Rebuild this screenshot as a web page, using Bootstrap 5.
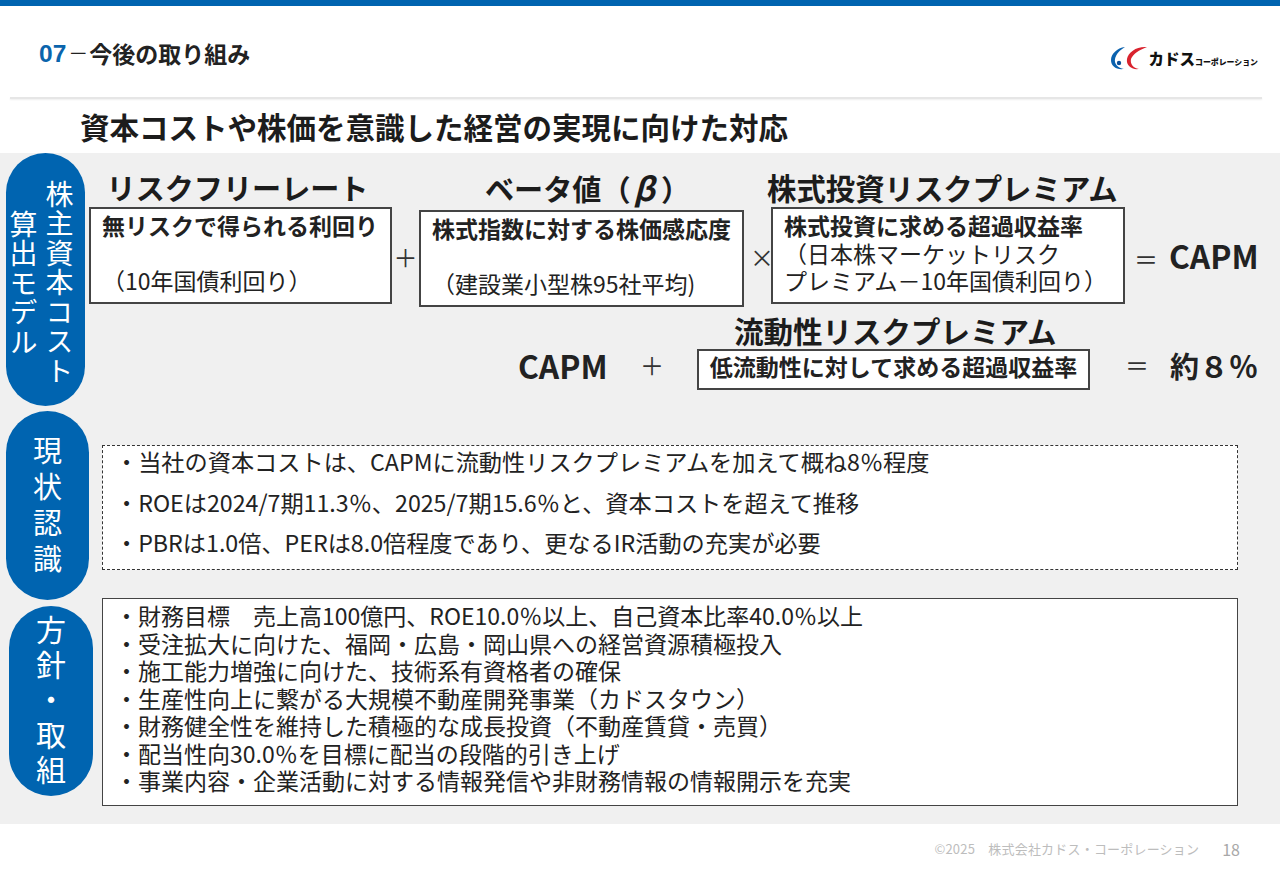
<!DOCTYPE html>
<html lang="ja"><head><meta charset="utf-8"><title>今後の取り組み</title>
<link href="https://cdn.jsdelivr.net/npm/bootstrap@5.3.0/dist/css/bootstrap.min.css" rel="stylesheet">
<style>
html,body{margin:0;height:886px;overflow:hidden;background:#fff}
body{font-family:"Noto Sans CJK JP","Noto Sans",sans-serif;color:#222}
.topline{height:6px;background:#0064b0}
.slidehead{height:91px;padding:4px 22px 0 39px}
.sec-no{font-size:24.5px;font-weight:700;color:#0a64ac;font-family:"Liberation Sans",sans-serif;line-height:1.2;margin-top:1px}
.sec-dash{font-size:20px;font-weight:400;color:#222;margin:0 2px}
.sec-name{font-size:23px;font-weight:700;color:#222;line-height:1.2;margin-left:-1px}
.headrule{height:2px;margin:0 18px 0 10px;background:#e6e6e6;box-shadow:0 1px 2px #eee}
.slidetitle{height:54px;padding-left:80px;font-size:29.5px;font-weight:700;line-height:54px;color:#1c1c1c;margin:0}
.panel{height:671px;background:#f0f0f0}
.pillbox{background:#0064b0;color:#fff;flex:none;border-radius:42px;font-size:29px}
.pill-a{width:79px;height:253px;margin-left:6px;border-radius:40px;writing-mode:vertical-rl;line-height:29px;padding:27px 0 0 0;font-size:28px;letter-spacing:1.5px;text-align:left}
.pill-a span{display:block;margin-right:11.5px}
.pill-a .col2{padding-top:29.5px;margin-right:7px}
.pill-b{width:83px;height:189px;margin:5px 0 0 6px;line-height:36px;text-align:center;padding-top:20px}
.pill-c{width:84px;height:190px;margin:6px 0 0 9px;line-height:35px;text-align:center;padding-top:5px;font-size:30px}
.formula{margin-left:4px;width:1191px}
.fgrid{display:grid;grid-template-columns:303px 27px 325px 27px 354px auto;align-items:start}
.fhead{font-size:29.1px;font-weight:700;line-height:36px;white-space:nowrap;color:#1c1c1c;margin:16px 0 1px}
.hd1{text-align:center;padding-right:6px}
.hd2{padding-left:66px}
.hd2 em{font-size:32px;margin:0 6px 0 3px}
.hd3{font-size:29.4px;margin-left:-4px}
.fbox{background:#fff;border:2px solid #444;font-size:23px;line-height:27.5px;padding:3px 0 0 11px;white-space:nowrap;height:97px}
.fbox b{font-size:23px;font-weight:700;display:block}
.fbox-mid{margin-top:3px}
.fop{font-size:24px;line-height:24px;text-align:center;color:#333;margin-top:38px}
.fop-x{padding-left:6px}
.fres{font-size:31.8px;font-weight:700;white-space:nowrap;padding-left:9px;margin-top:28px;line-height:40px}
.fres i{font-style:normal;font-weight:400;font-size:24px;margin-right:11px;color:#333}
.frow2-head{padding-left:645px;font-size:29.5px;font-weight:700;line-height:36px;white-space:nowrap;margin:5px 0 1px;color:#1c1c1c}
.frow2{padding-left:429px}
.capm{font-size:31.8px;font-weight:700;line-height:40px;width:114px;margin-top:-4px}
.fplus{font-size:24px;line-height:40px;width:65px;padding-left:8px;color:#333;margin-top:-4px}
.fbox2{background:#fff;border:2px solid #444;height:41px;width:393px;text-align:center;font-size:23px;font-weight:700;line-height:31px;white-space:nowrap}
.feq{font-size:24px;line-height:40px;width:80px;padding-left:35px;color:#333;margin-top:-4px}
.fpct{font-size:29px;font-weight:700;line-height:40px;white-space:nowrap;letter-spacing:.5px;margin-top:-4px}
.notebox{background:#fff;border:1px dashed #333;margin-left:13px;width:1136px;height:125px;font-size:23.2px;line-height:40.5px;padding:0 0 0 12px;white-space:nowrap;margin-top:39px}
.notebox div{margin-top:-5px;height:120px}
.planbox{background:#fff;border:1px solid #444;margin-left:9px;width:1136px;height:208px;font-size:23px;line-height:27.5px;padding:3px 0 0 12px;white-space:nowrap;margin-top:-2px}
.slidefoot{height:62px;padding:0 40px 12px 0}
.copy{font-size:13px;color:#bdbdbd;margin-right:23px;letter-spacing:.2px}
.pageno{font-size:16px;color:#a8a8a8}
.logowrap{padding-top:10px;gap:2px}
.logotype{font-weight:900;font-size:15.5px;color:#111;line-height:1;white-space:nowrap}
.logotype small{font-size:7.9px;font-weight:900}
</style></head>
<body>
<div class="topline"></div>
<header class="slidehead d-flex align-items-center justify-content-between">
  <div class="d-flex align-items-center"><span class="sec-no">07</span><span class="sec-dash">－</span><span class="sec-name">今後の取り組み</span></div>
  <div class="d-flex align-items-center logowrap">
    <svg width="36" height="25" viewBox="0 0 36 25"><path d="M14 1C6 2 0 8 0 14c0 6 5 10 13 9C7 22 3 18 4 13 5 8 9 4 14 1z" fill="#0b62ae"/><path d="M36 1C26 0 17 6 16 13c-1 6 4 11 12 10-6-1-9-5-8-10 2-5 8-9 16-12z" fill="#d9232e"/><circle cx="8" cy="17" r="2.2" fill="#0b4f98"/></svg>
    <span class="logotype">カドス<small>コーポレーション</small></span>
  </div>
</header>
<div class="headrule"></div>
<h1 class="slidetitle">資本コストや株価を意識した経営の実現に向けた対応</h1>
<main class="panel">
  <section class="d-flex">
    <div class="pillbox pill-a"><span>株主資本コスト</span><span class="col2">算出モデル</span></div>
    <div class="formula">
      <div class="fgrid">
        <div class="fhead hd1">リスクフリーレート</div><div></div>
        <div class="fhead hd2">ベータ値（<em>β</em>）</div><div></div>
        <div class="fhead hd3">株式投資リスクプレミアム</div><div></div>
        <div class="fbox"><b>無リスクで得られる利回り</b><br>（10年国債利回り）</div>
        <div class="fop">＋</div>
        <div class="fbox fbox-mid"><b>株式指数に対する株価感応度</b><br>（建設業小型株95社平均)</div>
        <div class="fop fop-x">×</div>
        <div class="fbox"><b>株式投資に求める超過収益率</b>（日本株マーケットリスク<br>プレミアム－10年国債利回り）</div>
        <div class="fres"><i>＝</i>CAPM</div>
      </div>
      <div class="frow2-head">流動性リスクプレミアム</div>
      <div class="d-flex align-items-start frow2">
        <div class="capm">CAPM</div><div class="fplus">＋</div><div class="fbox2">低流動性に対して求める超過収益率</div><div class="feq">＝</div><div class="fpct">約８％</div>
      </div>
    </div>
  </section>
  <section class="d-flex">
    <div class="pillbox pill-b">現<br>状<br>認<br>識</div>
    <div class="notebox"><div>・当社の資本コストは、CAPMに流動性リスクプレミアムを加えて概ね8％程度<br>・ROEは2024/7期11.3％、2025/7期15.6％と、資本コストを超えて推移<br>・PBRは1.0倍、PERは8.0倍程度であり、更なるIR活動の充実が必要</div></div>
  </section>
  <section class="d-flex">
    <div class="pillbox pill-c">方<br>針<br>・<br>取<br>組</div>
    <div class="planbox">・財務目標　売上高100億円、ROE10.0％以上、自己資本比率40.0％以上<br>・受注拡大に向けた、福岡・広島・岡山県への経営資源積極投入<br>・施工能力増強に向けた、技術系有資格者の確保<br>・生産性向上に繋がる大規模不動産開発事業（カドスタウン）<br>・財務健全性を維持した積極的な成長投資（不動産賃貸・売買）<br>・配当性向30.0％を目標に配当の段階的引き上げ<br>・事業内容・企業活動に対する情報発信や非財務情報の情報開示を充実</div>
  </section>
</main>
<footer class="slidefoot d-flex align-items-center justify-content-end"><span class="copy">©2025　株式会社カドス・コーポレーション</span><span class="pageno">18</span></footer>
<script src="https://cdn.jsdelivr.net/npm/bootstrap@5.3.0/dist/js/bootstrap.bundle.min.js"></script>
</body></html>
